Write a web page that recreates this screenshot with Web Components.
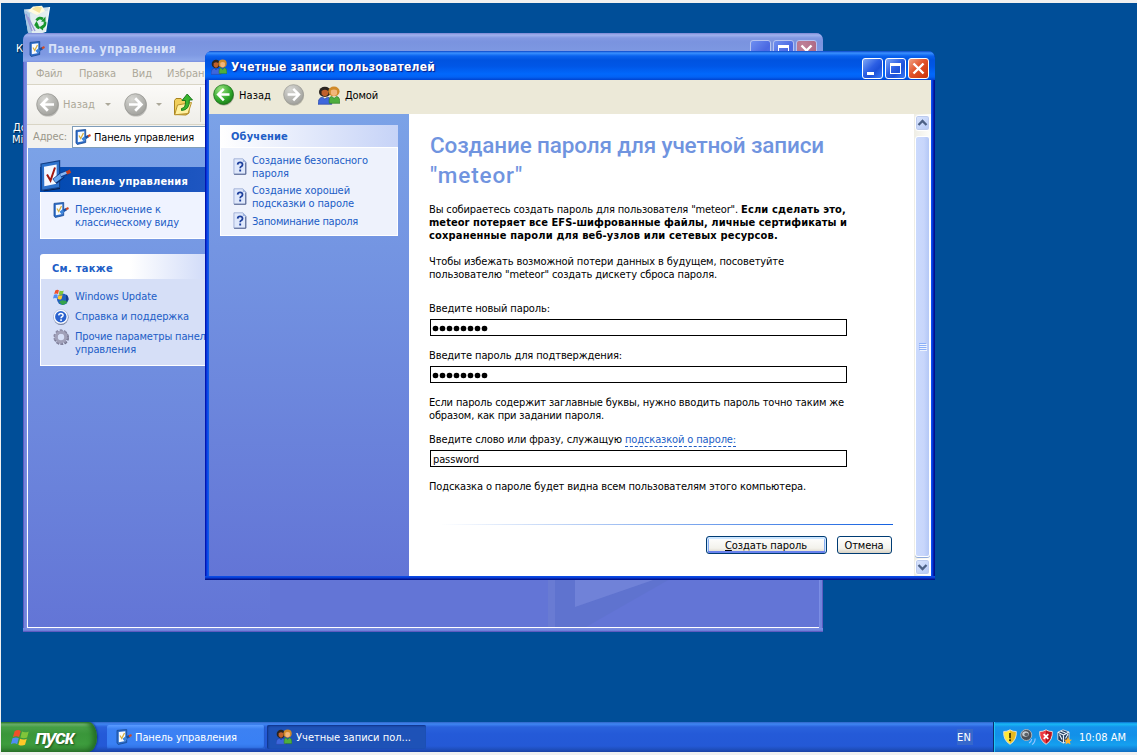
<!DOCTYPE html>
<html lang="ru">
<head>
<meta charset="utf-8">
<title>Учетные записи пользователей</title>
<style>
html,body{margin:0;height:100%;overflow:hidden;background:#f0f0f0}
body{font:11px/13px "DejaVu Sans Condensed","DejaVu Sans",sans-serif;font-stretch:condensed;color:#000}
xp-desktop{margin:3px 0 0 1px}
</style>
</head>
<body>
<xp-desktop>
  <desktop-icon slot="icons" style="left:15px;top:2px"><xp-icon name="bin" w="28" h="30" style="margin-left:7px"></xp-icon><div style="margin-top:7px">К</div></desktop-icon>
  <desktop-icon slot="icons" style="left:11px;top:119px"><div style="line-height:12px"><div style="padding-left:1px">До</div><div>Mi</div></div></desktop-icon>

  <xp-window slot="windows" caption="Панель управления" cw="128" icon="panel" inactive style="left:22px;top:30px;width:800px;height:599px">
    <control-panel></control-panel>
  </xp-window>

  <xp-window slot="windows" caption="Учетные записи пользователей" cw="204" icon="users" style="left:204px;top:48px;width:730px;height:529px">
    <user-accounts></user-accounts>
  </xp-window>

  <xp-taskbar slot="taskbar">
    <xp-task icon="panel" w="158" tw="102" label="Панель управления"></xp-task>
    <xp-task icon="users" w="159" tw="115" label="Учетные записи пол..." active></xp-task>
    <xp-tray slot="tray"></xp-tray>
  </xp-taskbar>
</xp-desktop>

<script>
const define=(name,markup,setup)=>customElements.define(name,class extends HTMLElement{
  constructor(){super();this.attachShadow({mode:'open'});}
  connectedCallback(){
    if(this.ready)return;this.ready=true;
    const t=document.createElement('template');
    t.innerHTML=typeof markup==='function'?markup(this):markup;
    this.shadowRoot.append(t.content.cloneNode(true));
    if(setup)setup(this);
  }
});

/* One line of text, tracked to the width given in "w". */
define('x-t',`<style>:host{display:inline-block;white-space:pre;vertical-align:top}</style><slot></slot>`,el=>{
  const w=+el.getAttribute('w');
  if(!w)return;
  el.style.width='max-content';
  const n=[...el.textContent].length;
  const natural=el.getBoundingClientRect().width;
  if(natural)el.style.letterSpacing=((w-natural)/n).toFixed(3)+'px';
  el.style.width=w+'px';
});

const users=`<circle cx="5" cy="5" r="4.3" fill="#2a2420"/><path d="M2.600 4.200q2.400-2 4.800 0v2.800Q5 10.500 2.600 7z" fill="#c0602c"/><path d="M0 15.400Q0 9.600 3.400 9.400L5 11l1.800-1.600Q10 9.600 10 15.400z" fill="#3e66dc" stroke="#2441a0" stroke-width=".5"/><circle cx="11.600" cy="4.600" r="4.100" fill="#d08a2a"/><path d="M9.300 3.800q2.300-1.600 4.600 0v2.900q-2.300 3.300-4.600 0z" fill="#f2b67a"/><path d="M8.200 14.600Q7.600 9 10 8.800l1.700 1.600 1.800-1.600q2.600.3 2.400 5.800z" fill="#4fae3d" stroke="#2c7a24" stroke-width=".5"/>`;
const doc=`<path d="M1 .8h9.500L14 4v12H1z" fill="#dfe8fb" stroke="#93a4cf" stroke-width=".8"/><path d="M10.500.8V4H14z" fill="#9fb3de"/><path d="M13.600 4.500V16.300H1.200" fill="none" stroke="#54648f" stroke-width="1"/><path d="M5 6.600q.1-2.200 2.600-2.200t2.600 2.100q0 1.300-1.400 2-1.100.5-1.100 1.700" fill="none" stroke="#1d3f9c" stroke-width="1.900"/><rect x="6.700" y="11.500" width="2" height="2" fill="#1d3f9c"/>`;
const ball=(a,b,c,flip)=>`<defs><radialGradient id="g" cx=".35" cy=".25" r=".9"><stop offset="0" stop-color="${a}"/><stop offset=".6" stop-color="${b}"/><stop offset="1" stop-color="${c}"/></radialGradient></defs><circle cx="12" cy="12.600" r="11" fill="#000" opacity=".22"/><circle cx="11.500" cy="11.500" r="10.800" fill="url(#g)" stroke="${c}" stroke-width=".8"/><g fill="none" stroke="#fff" stroke-width="2.700" ${flip?'transform="translate(23 0) scale(-1 1)"':''}><path d="M11.800 5.200L5.600 11.500l6.200 6.300M6 11.500h12"/></g>`;
const flag=`<path d="M3.700 2.800Q6.400.9 8.600 2.500L7.300 7.600Q5 6.300 2.300 7.700z" fill="#f0502a"/><path d="M9.600 3Q12 4.400 15 2.900L13.700 8Q11 9.400 8.300 8z" fill="#7fc53a"/><path d="M2 8.700Q4.700 7.200 7 8.600L5.700 13.600Q3.500 12.200.7 13.600z" fill="#4f8df3"/><path d="M8 9.100Q10.600 10.400 13.400 9L12 14.100Q9.500 15.500 6.700 14z" fill="#ffc828"/>`;
const shield=(l,r,inner)=>`<path d="M8 .8Q11 2.800 14.300 2.500 15 11 8 15.300 1 11 1.700 2.500 5 2.800 8 .8z" fill="${l}" stroke="#d9d9d9" stroke-width="1"/><path d="M8 1.600Q11 3.300 13.700 3.100 14 10.500 8 14.500z" fill="${r}"/>${inner}`;
const ICONS={
  panel:['0 0 16 16',`<path d="M1 1.400L10.700.5v13L2.200 15.500 1 14z" fill="#2d6cc8" stroke="#174a94" stroke-width=".8"/><path d="M2.800 3L9.300 2.300v9.600l-6.500 1.300z" fill="#f7fbff"/><path d="M4 6.500l1.700 3L8.500 4" fill="none" stroke="#d8b040" stroke-width="1.300"/><path d="M7.500 11l4-3.300" stroke="#3b83da" stroke-width="3.200"/><path d="M10.500 8.700l3-1.600" stroke="#1b4f9e" stroke-width="2.600"/><path d="M13 7.200l2.500-1.100" stroke="#d04a26" stroke-width="2.200"/>`],
  bigpanel:['0 0 32 32',`<path d="M2 4L20 1v28L4 31.300 1 28.500z" fill="#071e4c"/><path d="M1 4L19.600.7v26.800L1.600 30.400z" fill="#2d72cc" stroke="#123f86" stroke-width="1.200"/><path d="M4 6.800l12.600-2.400v19.400L4.300 26.300z" fill="#f4f8ff"/><path d="M7 14.500l3.500 6L15 7.500" fill="none" stroke="#a01810" stroke-width="2"/><path d="M14.500 21.500l8-6.500" stroke="#0a2f73" stroke-width="6.500"/><path d="M14.500 20.800l8-6" stroke="#68a8f0" stroke-width="4.500"/><path d="M20.500 15.500l7-3" stroke="#0f3f92" stroke-width="5"/><path d="M20.500 15l6.500-2.600" stroke="#8ab8f5" stroke-width="2.500"/><path d="M26.500 13l4-1.800" stroke="#c43c20" stroke-width="3.500"/>`],
  users:['0 0 16 16',users],
  doc:['0 0 15 17',doc],
  back:['0 0 24 24',ball('#9be27f','#2ea52a','#146b12')],
  gback:['0 0 24 24',ball('#d6d6d2','#b2b2ae','#999994')],
  gfwd:['0 0 24 24',ball('#d6d6d2','#b2b2ae','#999994',true)],
  flag:['0 0 16 16',flag],
  up:['0 0 20 23',`<path d="M1.500 21.500V7.500l1.500-2h5l1.500 2H16v12.500L13 22z" fill="#f1cf5b" stroke="#a88420" stroke-width="1"/><path d="M1.700 21.800L4.500 12 18.500 9.500 15 20.500z" fill="#fff0a0" stroke="#b8922c" stroke-width="1"/><path d="M8.500 15.500Q13 15 12.500 7.500H9L14.200 1 19.500 7H16.300Q17 17 8.500 17.500z" fill="#39b52e" stroke="#167018" stroke-width=".9"/>`],
  update:['0 0 16 16',`<circle cx="9.700" cy="10.200" r="5.700" fill="#2460bf"/><path d="M6 13q3-3 6-1l3-3-1 5-4.500 2.200z" fill="#35a24a"/><path d="M13 5.500q3 2 2.400 5.500L13 13z" fill="#173f90"/><g transform="translate(-.5 -.7) scale(.75)">${flag}</g>`],
  help:['0 0 16 16',`<circle cx="8" cy="8.500" r="7.500" fill="#66718e"/><circle cx="7.800" cy="7.800" r="7.300" fill="#fff" stroke="#aab7d8" stroke-width=".6"/><circle cx="7.800" cy="7.800" r="5.700" fill="#2a62cf"/><path d="M5.700 6.400q.1-2 2.200-2t2.200 1.800q0 1-1.100 1.600-.9.400-.9 1.500" fill="none" stroke="#fff" stroke-width="1.500"/><rect x="7.200" y="10.300" width="1.700" height="1.600" fill="#fff"/>`],
  gear:['0 0 16 16',`<circle cx="8.500" cy="8.800" r="6" fill="none" stroke="#6d6d86" stroke-width="3" stroke-dasharray="2.500 1.270"/><circle cx="8" cy="8" r="6.400" fill="none" stroke="#8d8da8" stroke-width="2.500" stroke-dasharray="2.400 1.620"/><circle cx="8" cy="8" r="4.700" fill="none" stroke="#a1a1b9" stroke-width="3"/>`],
  bin:['0 0 28 30',`<path d="M1 4.500L26.500 2 22.500 27Q14 31 5 27.500z" fill="#cfe0ec"/><path d="M1 4.500L7 8.500 9 28.500 5 27.500z" fill="#a9c8e4"/><path d="M7 8.500L25.500 5.500 22 27q-6 2.500-13 1.500z" fill="#e3edf0" opacity=".95"/><path d="M5 6L10 1.500 19 .8 22 6 14 10z" fill="#fffbe0"/><path d="M9 4L14 1.200 19 2.500 16.500 8z" fill="#f6e49c"/><path d="M3 9L9 26M5 12l7 14" stroke="#9a9ad8" stroke-width="1.500"/><path d="M26.500 2L22.500 27" stroke="#f5fafc" stroke-width="1.300"/><g fill="none" stroke="#18952c" stroke-width="2.700"><path d="M13.500 15.500Q16 11.500 20 14"/><path d="M22 17Q22.500 21 19 22.500"/><path d="M16.500 23Q13 22 13.500 19"/></g><path d="M18 16.500l4.500.5V11.500zM20.500 19.500L16 22.500l4 3zM11 20.500l5 .2L13.500 16z" fill="#18952c"/>`],
  warn:['0 0 16 16',shield('#ffe93a','#e8b820','<path d="M8 4v5.200" stroke="#3a3000" stroke-width="1.700"/><rect x="7.100" y="10.300" width="1.800" height="1.800" fill="#3a3000"/>')],
  red:['0 0 16 16',shield('#ee3a42','#b9151f','<path d="M5.700 5.200l4.600 4.600M10.300 5.200l-4.600 4.600" stroke="#fff" stroke-width="1.800"/>')],
  vol:['0 0 16 16',`<circle cx="6.300" cy="6" r="5.500" fill="#4b5058" stroke="#a9b2bb" stroke-width="1"/><ellipse cx="5.500" cy="5" rx="3.300" ry="2.800" fill="#c6ccd2"/><ellipse cx="6.300" cy="5.500" rx="2" ry="1.700" fill="#5c6168"/><path d="M9 14q2.300-1 2.700-4M12 15.500q2.800-1.500 3.200-6" fill="none" stroke="#96c4ff" stroke-width="1.200"/>`],
  box:['0 0 16 16',`<path d="M7 .8L13 3v7.500L7.500 14.300 1.800 10.800V3.200z" fill="#1f3a5a" stroke="#c8d6e4" stroke-width="1"/><path d="M2 3.200l5.500 2.800 5.500-3M7.500 6v8M3.500 5.500l2.500 5M12 5L9.500 9.500M4.500 2l5 2" fill="none" stroke="#e8f2fa" stroke-width="1.200"/><path d="M12 7.800l1.200 2.600 2.800.3-2.100 1.900.6 2.900L12 14l-2.500 1.500.6-2.900L8 10.700l2.800-.3z" fill="#ffb42e"/>`]
};
define('xp-icon',el=>{
  const [vb,body]=ICONS[el.getAttribute('name')];
  const w=el.getAttribute('w')||16,h=el.getAttribute('h')||w;
  return `<style>:host{display:block;flex:none;width:${w}px;height:${h}px}svg{display:block}</style><svg width="${w}" height="${h}" viewBox="${vb}" preserveAspectRatio="none">${body}</svg>`;
});

define('xp-desktop',`<style>
:host{display:flex;flex-direction:column;position:relative;width:1136px;height:749px;background:#004e98;overflow:hidden}
.space{flex:1}</style>
<slot name="icons"></slot><div class="space"></div><slot name="windows"></slot><slot name="taskbar"></slot>`);

define('desktop-icon',`<style>:host{display:block;position:absolute;color:#fff;text-shadow:1px 1px 1px #002040}</style><slot></slot>`);

define('title-button',el=>{
  const k=el.getAttribute('kind'),dim=el.hasAttribute('dim');
  const g={min:'<path d="M5 14h7v3H5z" fill="#fff"/>',max:'<path d="M5 5h11v11H5z M6 8h9v7h-9z" fill="#fff" fill-rule="evenodd"/>',close:'<path d="M5.500 5.500l10 10M15.500 5.500l-10 10" stroke="#fff" stroke-width="2.400"/>'}[k];
  const bg=k==='close'?(dim?'radial-gradient(circle at 30% 25%,#c08299,#a75f7c)':'linear-gradient(135deg,#f0a284,#e2542c 45%,#c83208)')
    :(dim?'linear-gradient(135deg,#6f8ff0,#4a68e2 60%,#4f74ea)':'linear-gradient(135deg,#7fa8f6,#2c5fe4 45%,#1c50d8 65%,#3b7bf8)');
  return `<style>:host{display:block;width:21px;height:21px;box-sizing:border-box;border:1px solid ${dim?'#b5c3f2':'#fff'};border-radius:3px;background:${bg}}svg{display:block;margin:-1px}</style><svg width="21" height="21">${g}</svg>`;
});

define('xp-window',el=>{
  const off=el.hasAttribute('inactive');
  return `<style>
:host{position:absolute;display:flex;flex-direction:column;box-sizing:border-box;border-radius:7px 7px 0 0;overflow:hidden;padding:0 4px 4px;
 background:${off?'linear-gradient(90deg,#5d5bc0 0 1px,#7184dc 1px 3px,#7b8ee4 3px calc(100% - 3px),#7184dc calc(100% - 3px) calc(100% - 1px),#5d5bc0 calc(100% - 1px))':'linear-gradient(90deg,#0018b0 0 1px,#0831d9 1px 2px,#1660f0 3px,#0855dd 4px calc(100% - 4px),#0a50ee calc(100% - 4px) calc(100% - 3px),#0838d8 calc(100% - 3px) calc(100% - 2px),#0020b0 calc(100% - 2px) calc(100% - 1px),#00138c calc(100% - 1px))'}}
header{display:flex;align-items:center;height:29px;flex:none;box-sizing:border-box;margin:0 -4px;padding:2px 6px 0;
 background:${off?'linear-gradient(#7b86d4,#a0b2ee 2px,#8198e2 5px,#7a93df 9px,#7f9ae3 22px,#8ba6ea 27px,#7b8fdf)':'linear-gradient(#0a45c8,#3a91ff 2px,#0a62ee 5px,#0053e0 9px,#0056e6 15px,#0168fc 23px,#0362f4 26px,#0043cf)'}}
x-t{flex:none;font-weight:bold;font-size:12px;line-height:16px;padding-top:1px;color:${off?'#d7e1f9':'#fff'};text-shadow:${off?'none':'1px 1px 1px #0a1883'}}
.sp{flex:1}.btns{display:flex;gap:2px;margin-top:3px}
.body{flex:1;display:flex;min-height:0;overflow:hidden}
footer{height:4px;margin:0 -4px -4px;flex:none;background:${off?'linear-gradient(#7b8ee4,#7184dc 60%,#5d5bc0 80%)':'linear-gradient(#0a50ea,#0838d0 50%,#00138c 80%)'}}
</style>
<header><xp-icon name="${el.getAttribute('icon')}"></xp-icon><x-t w="${el.getAttribute('cw')}" style="margin-left:${off?3:4}px">${el.getAttribute('caption')}</x-t><div class="sp"></div>
<div class="btns">${['min','max','close'].map(k=>`<title-button kind="${k}" ${off?'dim':''}></title-button>`).join('')}</div></header>
<div class="body"><slot></slot></div><footer></footer>`;
});

define('task-link',el=>{const mid=el.getAttribute('align')==='center';return `<style>:host{display:flex;align-items:${mid?'center':'flex-start'};color:#215dc6}
xp-icon{margin-bottom:${mid?2:0}px}
.t{display:flex;flex-direction:column;margin:var(--drop,0) 0 0 ${el.getAttribute('gap')||6}px}</style>
<xp-icon name="${el.getAttribute('icon')}" w="${el.getAttribute('iw')||16}" h="${el.getAttribute('ih')||16}"></xp-icon><div class="t"><slot></slot></div>`;});

define('control-panel',`<style>
:host{display:flex;flex-direction:column;flex:1;background:#6375d6}
.menu{height:23px;flex:none;display:flex;gap:17px;padding:5px 0 0 9px;box-sizing:border-box;background:#f3f2ee;color:#aca899;border-bottom:1px solid #d9d5c5}
.tools{height:40px;flex:none;display:flex;align-items:center;background:linear-gradient(#fbfaf8,#efeee9);color:#aca899;border-bottom:1px solid #d9d5c5;box-sizing:border-box;padding-left:9px}
.arrow{border:3px solid transparent;border-top-color:#aca899;border-bottom:0}
.sep{width:1px;height:35px;background:#cfcbbb;margin-left:7px}
.addr{height:23px;flex:none;display:flex;align-items:center;box-sizing:border-box;background:#f3f2ee;padding:0 0 0 6px;color:#9a978a}
.field{height:22px;box-sizing:border-box;flex:1;background:#fff;border:1px solid #7f9db9;display:flex;align-items:center;padding-left:2px;margin-left:5px;color:#000}
.main{flex:1;display:flex;border-left:1px solid #fff;border-bottom:1px solid #fff;overflow:hidden}
.side{width:242px;box-sizing:border-box;padding:12px 0 0 12px;background:linear-gradient(#7ba2e7,#6375d6)}
.view{flex:1;display:flex;align-items:flex-end}
.h1{height:32px;display:flex;align-items:flex-end;background:linear-gradient(90deg,#0049b0,#2a5bc8) 0 100%/100% 25px no-repeat;color:#fff;font-weight:bold}
.b1{--drop:1px;height:47px;box-sizing:border-box;border:1px solid #fff;border-top:0;background:#eff3ff;padding:10px 0 0 12px}
.h2{margin-top:15px;height:25px;box-sizing:border-box;padding:8px 0 0 12px;background:linear-gradient(90deg,#fff 90px,#c6d3f7 185px);border-radius:3px 0 0 0;color:#215dc6;font-weight:bold}
.b2{--drop:1px;height:87px;box-sizing:border-box;border:1px solid #fff;border-top:0;background:#d6dff7;padding:10px 0 0 12px;display:flex;flex-direction:column;gap:4px}
</style>
<div class="menu"><x-t w="26">Файл</x-t><x-t w="37">Правка</x-t><x-t w="20" style="margin-left:-1px">Вид</x-t><x-t w="56" style="margin-left:-2px">Избранное</x-t></div>
<div class="tools"><xp-icon name="gback" w="24"></xp-icon><x-t w="32" style="margin-left:3px">Назад</x-t><span class="arrow" style="margin-left:10px"></span><xp-icon name="gfwd" w="24" style="margin-left:13px"></xp-icon><span class="arrow" style="margin-left:8px"></span><xp-icon name="up" w="20" h="23" style="margin-left:11px"></xp-icon><div class="sep"></div></div>
<div class="addr"><x-t w="34">Адрес:</x-t><div class="field"><xp-icon name="panel"></xp-icon><x-t w="100" style="margin:1px 0 0 3px">Панель управления</x-t></div></div>
<div class="main"><div class="side">
 <div class="h1"><xp-icon name="bigpanel" w="32"></xp-icon><x-t w="116" style="margin-bottom:4px">Панель управления</x-t></div>
 <div class="b1"><task-link icon="panel"><x-t w="86">Переключение к</x-t><x-t w="104">классическому виду</x-t></task-link></div>
 <div class="h2"><x-t w="61">См. также</x-t></div>
 <div class="b2"><task-link icon="update"><x-t w="82">Windows Update</x-t></task-link><task-link icon="help"><x-t w="114">Справка и поддержка</x-t></task-link><task-link icon="gear"><x-t w="137">Прочие параметры панели</x-t><x-t w="61">управления</x-t></task-link></div>
</div><div class="view"><svg width="550" height="60" style="margin-left:1px"><path d="M277 0h143L315 60H277z" fill="#5a70c4" opacity=".35"/><path d="M277 0h7v60h-7z" fill="#8090de" opacity=".3"/><path d="M304 12h81L304 40z" fill="#8292e2" opacity=".5"/></svg></div></div>`);

define('xp-field',`<style>:host{display:flex;align-items:center;width:417px;height:17px;box-sizing:border-box;border:1px solid #000;background:#fff;padding:1px 0 0 2px}</style><slot></slot>`);
define('password-dots',`<style>:host{display:flex;gap:2px}i{width:5px;height:5px;border-radius:3px;background:#000;box-shadow:0 0 0 .3px #000}</style>${'<i></i>'.repeat(8)}`);

define('xp-button',`<style>:host{display:flex;align-items:center;justify-content:center;height:18px;box-sizing:border-box;border:1px solid #003c74;border-radius:3px;background:linear-gradient(#fff,#f3f2ec 70%,#d9d2c3)}
:host([default]){box-shadow:inset 0 1px 0 1px #cee7ff,inset 0 -1px 0 1px #6982ee,inset 0 0 0 2px #89adf0}
slot{display:block;margin-left:-1px}</style><slot></slot>`);

define('xp-scrollbar',`<style>
:host{display:flex;flex-direction:column;align-items:center;width:17px;height:100%;box-sizing:border-box;background:linear-gradient(90deg,#eeede5,#fefefb);flex:none}
.b{width:15px;height:16px;box-sizing:border-box;border:1px solid #fff;border-radius:3px;background:linear-gradient(135deg,#dce6fd,#b4c8f6);box-shadow:0 0 0 1px #bccbee inset;flex:none}
.b svg{display:block;margin:-1px}
.thumb{width:15px;box-sizing:border-box;margin:5px 0 2px;flex:1;border:1px solid #fff;border-radius:3px;background:linear-gradient(90deg,#cbdafd,#c8d6fb 60%,#b4c8f6);box-shadow:0 1px 0 #8eaadb;display:flex;flex-direction:column;gap:1px;align-items:center;justify-content:center}
.thumb i{width:7px;height:1px;background:#8cb0f8;box-shadow:1px 1px 0 #eef4fe}
</style><div class="b" style="margin-top:1px"><svg width="15" height="16"><path d="M3.500 10l4-4 4 4" fill="none" stroke="#4d6185" stroke-width="2.300"/></svg></div><div class="thumb"><i></i><i></i><i></i><i></i></div><div class="b" style="margin-bottom:1px"><svg width="15" height="16"><path d="M3.500 6l4 4 4-4" fill="none" stroke="#4d6185" stroke-width="2.300"/></svg></div>`);

define('user-accounts',`<style>
:host{display:flex;flex-direction:column;flex:1}
.tools{height:34px;flex:none;display:flex;align-items:center;background:#ece9d8;padding:0 0 4px 4px;box-sizing:border-box}
.main{display:flex;flex:1;min-height:0}
.side{width:200px;flex:none;box-sizing:border-box;padding:11px;background:linear-gradient(#7ba2e7,#6375d6)}
.head{height:22px;box-sizing:border-box;padding:5px 0 0 11px;background:linear-gradient(90deg,#fff,#c6d3f7);color:#215dc6;font-weight:bold}
.box{height:89px;box-sizing:border-box;border:1px solid #fff;background:#eef2fc;padding:6px 0 0 12px;display:flex;flex-direction:column;gap:4px}
.content{flex:1;padding:0 0 0 20px;display:flex;flex-direction:column;min-width:0}
h1{margin:16px 0 0 1px;font:500 22.500px/30px Roboto,sans-serif;font-stretch:normal;color:#7094df;display:flex;flex-direction:column}
p{margin:0;display:flex;flex-direction:column;align-items:flex-start}
xp-field{margin:4px 0 0 1px}
.ln{display:flex}
.link{color:#215dc6}
.link x-t{height:13px;border-bottom:1px dashed #215dc6}
.rule{margin:31px 0 0 11px;height:1px;width:453px;flex:none;background:linear-gradient(90deg,#fff,#1360e0)}
.btns{display:flex;gap:10px;margin:11px 0 0 277px}
</style>
<div class="tools"><xp-icon name="back" w="22"></xp-icon><x-t w="32" style="margin-left:4px">Назад</x-t><xp-icon name="gfwd" w="22" style="margin-left:12px"></xp-icon><xp-icon name="users" w="22" h="19" style="margin-left:13px"></xp-icon><x-t w="33" style="margin-left:5px">Домой</x-t></div>
<div class="main"><div class="side"><div class="head"><x-t w="57">Обучение</x-t></div>
<div class="box"><task-link align="center" icon="doc" iw="14" ih="17" gap="5"><x-t w="116">Создание безопасного</x-t><x-t w="37">пароля</x-t></task-link>
<task-link align="center" icon="doc" iw="14" ih="17" gap="5"><x-t w="98">Создание хорошей</x-t><x-t w="102">подсказки о пароле</x-t></task-link>
<task-link align="center" icon="doc" iw="14" ih="17" gap="5" style="margin-top:-2px"><x-t w="106">Запоминание пароля</x-t></task-link></div></div>
<div style="flex:1;display:flex;background:#fff"><div class="content">
<h1><x-t w="394">Создание пароля для учетной записи</x-t><x-t w="93">"meteor"</x-t></h1>
<p style="margin-top:13px"><span class="ln"><x-t w="312">Вы собираетесь создать пароль для пользователя "meteor". </x-t><x-t w="105" style="font-weight:bold">Если сделать это,</x-t></span><x-t w="418" style="font-weight:bold">meteor потеряет все EFS-шифрованные файлы, личные сертификаты и</x-t><x-t w="349" style="font-weight:bold">сохраненные пароли для веб-узлов или сетевых ресурсов.</x-t></p>
<p style="margin-top:13px"><x-t w="355">Чтобы избежать возможной потери данных в будущем, посоветуйте</x-t><x-t w="288">пользователю "meteor" создать дискету сброса пароля.</x-t></p>
<p style="margin-top:21px"><x-t w="121">Введите новый пароль:</x-t></p>
<xp-field><password-dots></password-dots></xp-field>
<p style="margin-top:13px"><x-t w="193">Введите пароль для подтверждения:</x-t></p>
<xp-field><password-dots></password-dots></xp-field>
<p style="margin-top:13px"><x-t w="415">Если пароль содержит заглавные буквы, нужно вводить пароль точно таким же</x-t><x-t w="175">образом, как при задании пароля.</x-t></p>
<p style="margin-top:11px"><span class="ln"><x-t w="196">Введите слово или фразу, служащую </x-t><span class="link"><x-t w="111">подсказкой о пароле:</x-t></span></span></p>
<xp-field style="margin-top:3px"><x-t w="46">password</x-t></xp-field>
<p style="margin-top:13px"><x-t w="377">Подсказка о пароле будет видна всем пользователям этого компьютера.</x-t></p>
<div class="rule"></div>
<div class="btns"><xp-button default style="width:121px"><x-t w="82"><u>С</u>оздать пароль</x-t></xp-button><xp-button style="width:55px"><x-t w="39">Отмена</x-t></xp-button></div>
</div><xp-scrollbar></xp-scrollbar></div></div>`);

define('xp-task',el=>{const a=el.hasAttribute('active');return `<style>:host{display:flex;align-items:center;box-sizing:border-box;width:${el.getAttribute('w')}px;height:24px;padding-left:9px;border-radius:2px;color:#fff;
background:${a?'#1e52b7':'linear-gradient(#5a9bff,#3c81f3 4px,#3980f4 19px,#2f6fe0)'};box-shadow:${a?'inset 1px 1px 2px #0f3286':'inset -1px -1px 1px #2358c8'}}</style>
<xp-icon name="${el.getAttribute('icon')}"></xp-icon><x-t w="${el.getAttribute('tw')}" style="margin-left:${a?4:3}px">${el.getAttribute('label')}</x-t>`;});

define('xp-taskbar',`<style>
:host{display:flex;height:30px;flex:none;background:linear-gradient(#3165c6,#3f86f2 2px,#2a62dc 5px,#245ad8 12px,#2459d6 24px,#1f50c0 27px,#1941a5)}
.start{width:96px;display:flex;align-items:center;box-sizing:border-box;padding-left:9px;border-radius:0 9px 9px 0/0 15px 15px 0;background:linear-gradient(#2a7d2a,#78b978 2px,#47a047 5px,#3a963a 12px,#3d9c3d 22px,#389038 26px,#2d742d);box-shadow:inset -4px 0 5px #246e24,1px 0 2px #12388e}
.start x-t{font:italic bold 20px/24px "Liberation Sans",sans-serif;color:#fff;text-shadow:1px 1px 2px #1c4e1c;margin-left:5px}
.tasks{display:flex;gap:2px;margin:3px 0 0 10px}
.sp{flex:1}
.lang{align-self:center;width:16px;height:16px;line-height:17px;color:#fff;background:#3668cc;margin-right:20px}
</style><div class="start"><xp-icon name="flag" w="20" h="19"></xp-icon><x-t w="38">пуск</x-t></div><div class="tasks"><slot></slot></div><div class="sp"></div><div class="lang"><x-t w="14">EN</x-t></div><slot name="tray"></slot>`);

define('xp-tray',`<style>:host{display:flex;align-items:center;width:144px;box-sizing:border-box;padding-left:8px;gap:2px;color:#fff;border-left:1px solid #0a2f6c;box-shadow:inset 1px 0 0 #1fc5f5;background:linear-gradient(#0d6fd0,#18b9f5 2px,#1593ec 5px,#1290e8 13px,#15a0ef 23px,#1282d8 27px,#0f6cc0)}</style>
<xp-icon name="warn"></xp-icon><xp-icon name="vol"></xp-icon><xp-icon name="red"></xp-icon><xp-icon name="box"></xp-icon><x-t w="47" style="margin-left:5px">10:08 AM</x-t>`);
</script>
</body>
</html>
